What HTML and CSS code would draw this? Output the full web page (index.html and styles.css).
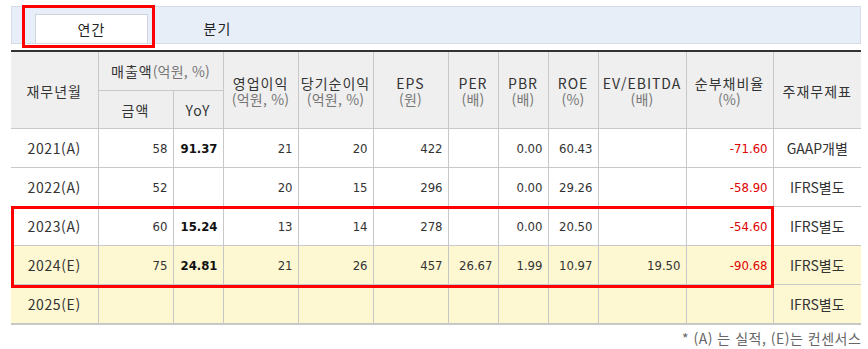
FILE: index.html
```html
<!DOCTYPE html>
<html lang="ko">
<head>
<meta charset="utf-8">
<title>재무정보</title>
<link rel="stylesheet" href="styles.css">
</head>
<body>
<div class="page">
  <div class="tabs">
    <div class="tab active">연간</div>
    <div class="tab">분기</div>
  </div>
  <table class="fin">
    <colgroup>
      <col class="w87"><col class="w75"><col class="w50"><col class="w75"><col class="w75"><col class="w75">
      <col class="w50"><col class="w50"><col class="w50"><col class="w88"><col class="w87"><col class="w88">
    </colgroup>
    <thead>
      <tr class="hr1">
        <th rowspan="2">재무년월</th>
        <th colspan="2">매출액<span class="u">(억원, %)</span></th>
        <th rowspan="2">영업이익<br><span class="u">(억원, %)</span></th>
        <th rowspan="2">당기순이익<br><span class="u">(억원, %)</span></th>
        <th rowspan="2">EPS<br><span class="u">(원)</span></th>
        <th rowspan="2">PER<br><span class="u">(배)</span></th>
        <th rowspan="2">PBR<br><span class="u">(배)</span></th>
        <th rowspan="2">ROE<br><span class="u">(%)</span></th>
        <th rowspan="2">EV/EBITDA<br><span class="u">(배)</span></th>
        <th rowspan="2">순부채비율<br><span class="u">(%)</span></th>
        <th rowspan="2">주재무제표</th>
      </tr>
      <tr class="hr2">
        <th>금액</th>
        <th>YoY</th>
      </tr>
    </thead>
    <tbody>
      <tr>
        <td class="yr">2021(A)</td><td>58</td><td class="b">91.37</td><td>21</td><td>20</td><td>422</td>
        <td></td><td>0.00</td><td>60.43</td><td></td><td class="neg">-71.60</td><td class="std">GAAP개별</td>
      </tr>
      <tr>
        <td class="yr">2022(A)</td><td>52</td><td class="b"></td><td>20</td><td>15</td><td>296</td>
        <td></td><td>0.00</td><td>29.26</td><td></td><td class="neg">-58.90</td><td class="std">IFRS별도</td>
      </tr>
      <tr>
        <td class="yr">2023(A)</td><td>60</td><td class="b">15.24</td><td>13</td><td>14</td><td>278</td>
        <td></td><td>0.00</td><td>20.50</td><td></td><td class="neg">-54.60</td><td class="std">IFRS별도</td>
      </tr>
      <tr class="est">
        <td class="yr">2024(E)</td><td>75</td><td class="b">24.81</td><td>21</td><td>26</td><td>457</td>
        <td>26.67</td><td>1.99</td><td>10.97</td><td>19.50</td><td class="neg">-90.68</td><td class="std">IFRS별도</td>
      </tr>
      <tr class="est">
        <td class="yr">2025(E)</td><td></td><td></td><td></td><td></td><td></td>
        <td></td><td></td><td></td><td></td><td></td><td class="std">IFRS별도</td>
      </tr>
    </tbody>
  </table>
  <p class="note">* (A) 는 실적, (E)는 컨센서스</p>
  <div class="mark mark-tab"></div>
  <div class="mark mark-rows"></div>
</div>
</body>
</html>
```
FILE: styles.css
```css
html, body {
  margin: 0;
  padding: 0;
  background: #fff;
  overflow: hidden;
}
body {
  font-family: "Noto Sans CJK KR", "Noto Sans", sans-serif;
  color: #333;
}
.page {
  position: relative;
  width: 850px;
  padding: 6px 0 0 11px;
}
.tabs {
  box-sizing: border-box;
  height: 38px;
  background: #e8eef8;
  border: 1px solid #d5dce8;
  display: flex;
  align-items: flex-end;
  gap: 13px;
  padding-left: 23px;
}
.tab {
  box-sizing: border-box;
  width: 113px;
  height: 29px;
  display: flex;
  align-items: center;
  justify-content: center;
  font-size: 14px;
  letter-spacing: 1px;
  color: #222;
  padding-bottom: 1px;
}
.tab.active {
  background: #fff;
  border: 1px solid #d0d4dc;
  border-bottom: none;
}
.fin {
  margin-top: 6px;
  width: 850px;
  table-layout: fixed;
  border-collapse: collapse;
  border-top: 2px solid #333;
  border-bottom: 2px solid #c8c8c8;
}
.w87 { width: 87px; }
.w75 { width: 75px; }
.w50 { width: 50px; }
.w88 { width: 88px; }
.fin th, .fin td {
  border: 1px solid #c8c8c8;
  padding: 0;
}
.fin tr > :first-child { border-left: none; }
.fin tr > :last-child { border-right: none; }
.fin th {
  background: #efefef;
  font-weight: normal;
  font-size: 14px;
  line-height: 16px;
  letter-spacing: 1px;
  color: #333;
  text-align: center;
  vertical-align: middle;
}
.fin .hr1 th { height: 38px; }
.fin .hr2 th { height: 37px; }
.fin .hr1 th[rowspan="2"] { padding-top: 1px; }
.u {
  color: #777;
  letter-spacing: 0.2px;
}
.fin td {
  height: 38px;
  font-family: "DejaVu Sans Condensed", "Liberation Sans", sans-serif;
  font-size: 13px;
  text-align: right;
  padding-right: 5px;
  color: #333;
  background: #fff;
}
.fin tr.est td { background: #fdf7d2; }
.fin td.yr,
.fin td.std {
  text-align: center;
  padding-right: 0;
  font-family: "Noto Sans CJK KR", sans-serif;
  font-size: 14px;
  color: #333;
}
.fin td.yr { letter-spacing: 0.6px; }
.fin td.b {
  font-weight: bold;
  color: #111;
}
.fin td.neg { color: #e00000; }
.note {
  margin: 4px 0 0;
  padding-left: 671px;
  white-space: nowrap;
  font-size: 14px;
  letter-spacing: 0.5px;
  line-height: 18px;
  color: #666;
}
.mark {
  position: absolute;
  box-sizing: border-box;
  border: 3px solid #f00;
  pointer-events: none;
}
.mark-tab {
  left: 22px;
  top: 5px;
  width: 133px;
  height: 43px;
}
.mark-rows {
  left: 11px;
  top: 206px;
  width: 763px;
  height: 82px;
}
```
